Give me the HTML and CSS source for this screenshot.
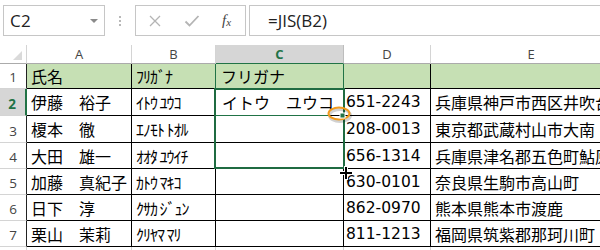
FILE: index.html
```html
<!DOCTYPE html>
<html lang="ja">
<head>
<meta charset="utf-8">
<title>Excel JIS</title>
<link rel="stylesheet" href="styles.css">
</head>
<body>
<div class="app">
  <div class="fbar">
    <div class="namebox"><span class="ref">C2</span><span class="dd"></span></div>
    <div class="dots"><i></i><i></i><i></i></div>
    <div class="btns">
      <svg class="ic" width="14" height="14" viewBox="0 0 14 14"><path d="M2 2 L12 12 M12 2 L2 12" stroke="#b4b4b4" stroke-width="1.3" fill="none"/></svg>
      <svg class="ic" width="16" height="14" viewBox="0 0 16 14"><path d="M1.5 7.5 L5.5 11.5 L14.5 2" stroke="#b4b4b4" stroke-width="1.8" fill="none"/></svg>
      <span class="fx">f<sub>x</sub></span>
    </div>
    <div class="formula">=JIS(B2)</div>
  </div>
  <div class="sheet">
    <div class="corner"><span class="tri"></span></div>
    <div class="ch">A</div>
    <div class="ch">B</div>
    <div class="ch ch-sel">C</div>
    <div class="ch">D</div>
    <div class="ch ch-last">E</div>

    <div class="rh">1</div>
    <div class="c hd jp">氏名</div>
    <div class="c hd hk">ﾌﾘｶﾞﾅ</div>
    <div class="c hd jp c1">フリガナ</div>
    <div class="c hd"></div>
    <div class="c hd"></div>

    <div class="rh rh-sel">2</div>
    <div class="c jp">伊藤　裕子</div>
    <div class="c hk">ｲﾄｳ ﾕｳｺ</div>
    <div class="c jp c2">イトウ　ユウコ</div>
    <div class="c num">651-2243</div>
    <div class="c jp">兵庫県神戸市西区井吹台東町</div>

    <div class="rh">3</div>
    <div class="c jp">榎本　徹</div>
    <div class="c hk">ｴﾉﾓﾄ ﾄｵﾙ</div>
    <div class="c"></div>
    <div class="c num">208-0013</div>
    <div class="c jp">東京都武蔵村山市大南</div>

    <div class="rh">4</div>
    <div class="c jp">大田　雄一</div>
    <div class="c hk">ｵｵﾀ ﾕｳｲﾁ</div>
    <div class="c"></div>
    <div class="c num">656-1314</div>
    <div class="c jp">兵庫県津名郡五色町鮎原</div>

    <div class="rh">5</div>
    <div class="c jp">加藤　真紀子</div>
    <div class="c hk">ｶﾄｳ ﾏｷｺ</div>
    <div class="c"></div>
    <div class="c num">630-0101</div>
    <div class="c jp">奈良県生駒市高山町</div>

    <div class="rh">6</div>
    <div class="c jp">日下　淳</div>
    <div class="c hk">ｸｻｶ ｼﾞｭﾝ</div>
    <div class="c"></div>
    <div class="c num">862-0970</div>
    <div class="c jp">熊本県熊本市渡鹿</div>

    <div class="rh">7</div>
    <div class="c jp">栗山　茉莉</div>
    <div class="c hk">ｸﾘﾔﾏ ﾏﾘ</div>
    <div class="c"></div>
    <div class="c num">811-1213</div>
    <div class="c jp">福岡県筑紫郡那珂川町</div>

    <div class="rh rh-last"></div>
    <div class="c g"></div>
    <div class="c g"></div>
    <div class="c g"></div>
    <div class="c g"></div>
    <div class="c g"></div>
  </div>

  <div class="selbox"></div>
  <div class="activeline"></div>
  <svg class="handle" width="26" height="18" viewBox="0 0 26 18">
    <ellipse cx="12" cy="7.5" rx="10.5" ry="6" fill="none" stroke="rgba(0,0,0,0.18)" stroke-width="3" transform="translate(1,2)"/>
    <ellipse cx="12" cy="7.5" rx="10.5" ry="6" fill="none" stroke="#f29b1d" stroke-width="2"/>
    <rect x="13" y="7" width="5" height="5" fill="#217346" stroke="#fff" stroke-width="1"/>
  </svg>
  <svg class="cursor" width="16" height="16" viewBox="0 0 16 16">
    <path d="M6 1 H10 V6 H15 V10 H10 V15 H6 V10 H1 V6 H6 Z" fill="#fff"/>
    <path d="M7 2 H9 V7 H14 V9 H9 V14 H7 V9 H2 V7 H7 Z" fill="#000"/>
  </svg>
</div>
</body>
</html>
```
FILE: styles.css
```css
html, body {
  margin: 0;
  padding: 0;
  background: #fff;
  overflow: hidden;
}
.app {
  position: relative;
  width: 600px;
  height: 250px;
  overflow: hidden;
  font-family: "Open Sans", "Noto Sans", sans-serif;
}
.fbar {
  display: flex;
  align-items: stretch;
  height: 31px;
  padding: 5px 0 9px 3px;
}
.namebox {
  box-sizing: border-box;
  width: 102px;
  border: 1px solid #c6c6c6;
  display: flex;
  align-items: center;
  justify-content: space-between;
  padding: 0 6px 0 6px;
}
.ref {
  font-size: 17px;
  color: #222;
  letter-spacing: 0.3px;
}
.dd {
  width: 0;
  height: 0;
  border-left: 4px solid transparent;
  border-right: 4px solid transparent;
  border-top: 4px solid #8a8a8a;
  margin-top: 1px;
}
.dots {
  width: 30px;
  display: flex;
  flex-direction: column;
  align-items: center;
  justify-content: center;
  gap: 2px;
}
.dots i {
  display: block;
  width: 2px;
  height: 2px;
  background: #b8b8b8;
}
.btns {
  box-sizing: border-box;
  width: 111px;
  border: 1px solid #c6c6c6;
  display: flex;
  align-items: center;
  padding: 0 0 0 12px;
  gap: 22px;
}
.fx {
  font-family: "Liberation Serif", serif;
  font-style: italic;
  font-size: 15px;
  color: #444;
}
.fx sub {
  font-size: 11px;
  vertical-align: -1px;
}
.formula {
  box-sizing: border-box;
  flex: 1;
  margin-left: 3px;
  border: 1px solid #c6c6c6;
  border-right: none;
  display: flex;
  align-items: center;
  padding-left: 18px;
  font-size: 17px;
  color: #222;
}

.sheet {
  display: grid;
  grid-template-columns: 27px 105px 84px 128px 87px 200px;
  grid-template-rows: 19px 25px 27px 27px 26px 26px 26px 26px 20px;
}
.sheet > div {
  box-sizing: border-box;
}
.corner {
  border-right: 1px solid #d4d4d4;
  border-bottom: 1px solid #ababab;
  position: relative;
}
.tri {
  position: absolute;
  right: 4px;
  bottom: 3px;
  width: 0;
  height: 0;
  border-left: 9px solid transparent;
  border-bottom: 9px solid #dadada;
}
.ch {
  border-right: 1px solid #d4d4d4;
  border-bottom: 1px solid #ababab;
  font-size: 13px;
  color: #444;
  text-align: center;
  line-height: 19px;
}
.ch-sel {
  background: #d6d6d6;
  color: #217346;
  font-weight: 700;
  border-bottom-color: #217346;
  border-right-color: #bdbdbd;
}
.ch-last { border-right: none; }
.rh {
  border-right: 1px solid #222;
  border-bottom: 1px solid #d4d4d4;
  font-size: 13.5px;
  color: #444;
  display: flex;
  align-items: flex-end;
  justify-content: center;
  padding-bottom: 2px;
}
.rh-sel {
  background: #d6d6d6;
  color: #217346;
  font-weight: 700;
  border-right: 2px solid #217346;
  padding-right: 1px;
}
.rh-last { border-right-color: #d4d4d4; }
.c {
  border-right: 1px solid #000;
  border-bottom: 1px solid #000;
  padding: 0 2px 0 4px;
  display: flex;
  align-items: center;
  white-space: nowrap;
  overflow: hidden;
  color: #000;
}
.hd { background: #c6e0b4; }
.c1 {
  border-left: 1px solid #217346;
  border-right-color: #217346;
  margin-left: -1px;
  padding-left: 5px;
}
.jp {
  font-family: "Noto Sans CJK JP", sans-serif;
  font-size: 16px;
  line-height: 20px;
}
.hk {
  font-family: "Noto Sans CJK JP", sans-serif;
  font-size: 16px;
  line-height: 20px;
  letter-spacing: -1px;
}
.num {
  font-family: "DejaVu Sans", sans-serif;
  font-size: 15.5px;
  line-height: 20px;
  padding-left: 2px;
}
.c2 { padding-left: 6px; }
.g {
  border-right-color: #d4d4d4;
  border-bottom: none;
}

.selbox {
  position: absolute;
  left: 214px;
  top: 88px;
  width: 131px;
  height: 81px;
  box-sizing: border-box;
  border: 2px solid #1f6b41;
  pointer-events: none;
}
.activeline {
  position: absolute;
  left: 216px;
  top: 115px;
  width: 114px;
  height: 1px;
  background: #217346;
}
.handle {
  position: absolute;
  left: 327px;
  top: 106px;
}
.cursor {
  position: absolute;
  left: 338px;
  top: 165px;
}
```
